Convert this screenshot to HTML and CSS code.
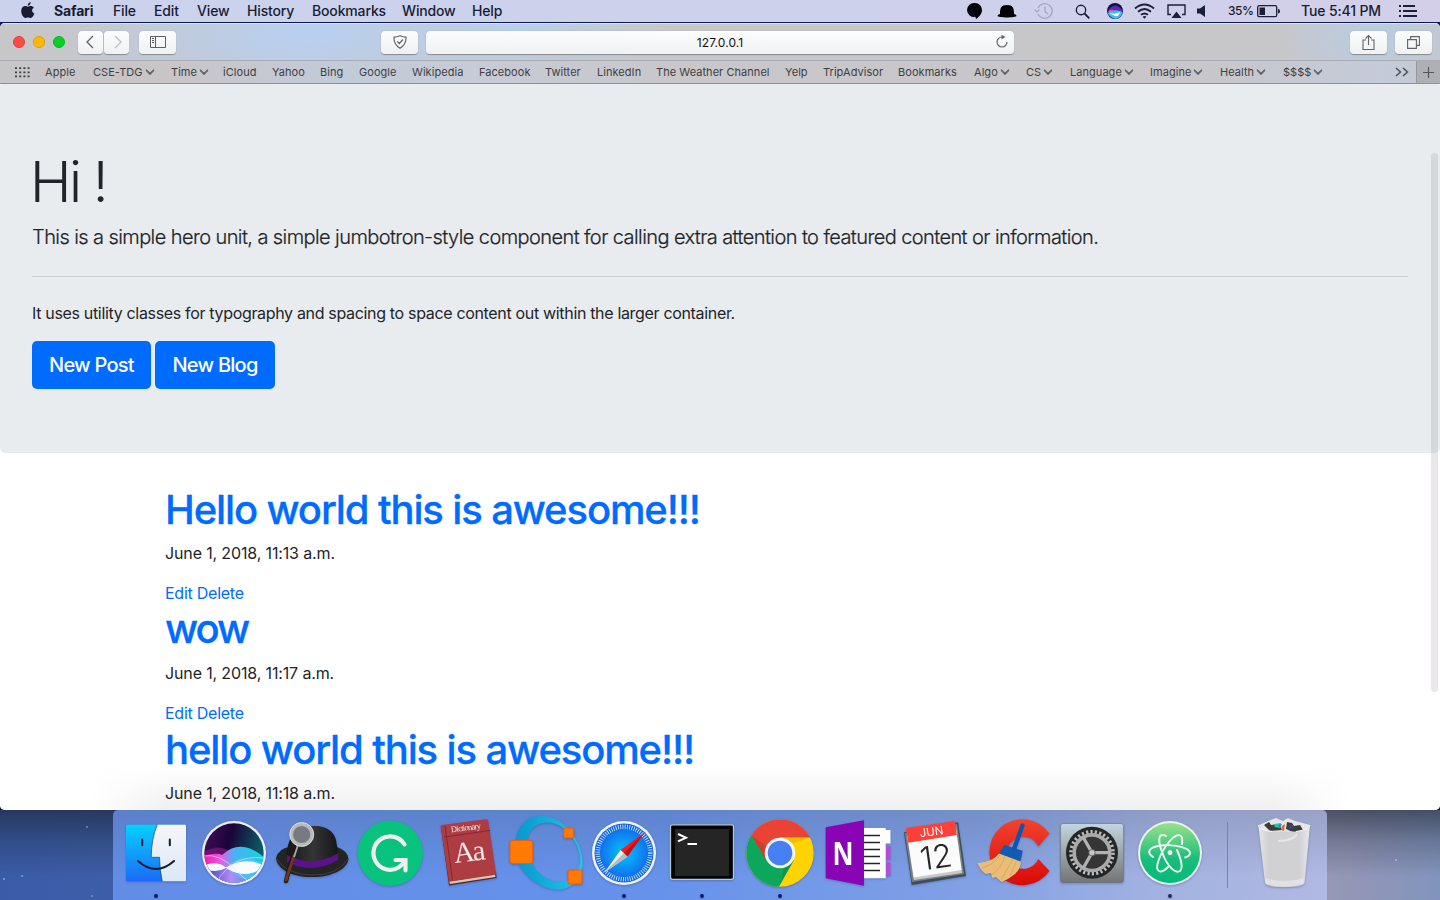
FILE: index.html
```html
<!DOCTYPE html>
<html lang="en">
<head>
<meta charset="utf-8">
<title>127.0.0.1</title>
<link rel="stylesheet" href="styles.css">
</head>
<body>
<header class="menubar">
  <nav class="menus">
    <svg class="apple" width="14" height="17" viewBox="0 0 14 17"><path fill="#181c33" d="M9.7 0C9.8 1.900 8.400 3.700 6.700 3.700 6.600 2 8 .3 9.700 0ZM6.900 4.700C7.600 4.700 8.500 4 9.900 4 11 4 12.200 4.600 12.900 5.600 10.300 7.100 10.700 10.600 13.400 11.600 12.600 13.900 11.200 16 9.700 16 8.600 16 8.300 15.400 7 15.400 5.700 15.400 5.300 16 4.300 16 2.400 16 .2 12.400.2 9.100.2 5.900 2.200 4.100 4.200 4.100 5.400 4.100 6.300 4.700 6.900 4.700Z"/></svg>
    <b>Safari</b><span>File</span><span>Edit</span><span>View</span><span>History</span><span>Bookmarks</span><span>Window</span><span>Help</span>
  </nav>
  <div class="extras">
    <svg width="16" height="18" viewBox="0 0 16 18"><path fill="#03030c" d="M8 1a7 7 0 0 1 7 7c0 4-3 7-6 9l-.6-2.200A7 7 0 1 1 8 1Z"/></svg>
    <svg width="20" height="18" viewBox="0 0 20 18"><path fill="#000" d="M3 12C3 6 4 3 10 3s7 3 7 9q2.500 .4 2.500 1.800C19.500 16 .5 16 .5 13.800Q.5 12.400 3 12Z"/></svg>
    <svg width="20" height="18" viewBox="0 0 20 18" fill="none" stroke="#a4a8c3" stroke-width="1.300"><path d="M4 6a7.400 7.400 0 1 1 0 6M.5 7.500 3 10l2.500-2.500M11 4.500V9.500l3 2.500"/></svg>
    <svg width="17" height="18" viewBox="0 0 17 18" fill="none" stroke="#1b2037" stroke-width="1.400"><circle cx="6" cy="8" r="4.700"/><path d="m9.500 11.500 4.800 4.800" stroke-width="1.800"/></svg>
    <svg width="17" height="18" viewBox="0 0 17 18"><circle cx="8" cy="9" r="8" fill="#150d4d"/><path fill="#5b2cb0" d="M2 7Q7 1 12 5T16 8L14 11Q7 7 2 11Z"/><path fill="#37c1ed" d="M.500 11Q7 6 15.500 10 15 15 9 17 3 16 .5 11Z"/><path fill="#fff" d="M2 11Q9 13 13 10 12 15 8 14Z"/><path fill="#f250a9" d="M1 9q5-3 7 1Q5 8 2 11Z"/></svg>
    <svg width="21" height="18" viewBox="0 0 21 18" fill="none" stroke="#1b2037" stroke-width="1.900"><path d="M1 6.500Q10.500-1.500 20 6.500M4 9.800Q10.500 4.200 17 9.800M7 12.800Q10.500 10 14 12.800"/><path d="m8.600 14.700 1.900 2 1.900-2q-1.900-1.500-3.800 0Z" fill="#1b2037" stroke="none"/></svg>
    <svg width="19" height="18" viewBox="0 0 19 18"><path d="M4 12.500H1V3H18V12.500H15" fill="none" stroke="#1b2037" stroke-width="1.400"/><path fill="#1b2037" d="M9.500 9.500 14.500 16H4.500Z"/></svg>
    <svg width="12" height="18" viewBox="0 0 12 18"><path fill="#1b2037" d="M0 6.500H3L8 3V15L3 11.500H0Z"/></svg>
    <span class="pct">35%</span>
    <svg width="24" height="18" viewBox="0 0 24 18"><rect x=".7" y="3.700" width="19" height="11" rx="1.500" fill="none" stroke="#1b2037" stroke-width="1.300"/><path fill="#1b2037" d="M2.500 5.500H8V13H2.500ZM21 7q2 0 2 2.200T21 11.500Z"/></svg>
    <span class="time">Tue 5:41 PM</span>
    <svg width="19" height="18" viewBox="0 0 19 18" stroke="#1b2037" stroke-width="1.800"><path d="M0 4H2M4 4H16M0 9H2M4 9H18M0 14H2M4 14H18" /></svg>
  </div>
</header>

<main class="window">
  <div class="toolbar">
    <div class="lights"><i class="red"></i><i class="yellow"></i><i class="green"></i></div>
    <div class="pair">
      <span class="tool back"><svg width="12" height="16" viewBox="0 0 12 16"><path d="M8 2 2 8l6 6" fill="none" stroke="#606166" stroke-width="1.300"/></svg></span>
      <span class="tool back"><svg width="12" height="16" viewBox="0 0 12 16"><path d="m4 2 6 6-6 6" fill="none" stroke="#bdbdc2" stroke-width="1.300"/></svg></span>
    </div>
    <span class="tool side"><svg width="16" height="12" viewBox="0 0 16 12" fill="none" stroke="#5d5e62"><path d="M.5.500H15.500V11.500H.5ZM5.500.500V11.500M2 2.500H4M2 4.500H4M2 6.500H4"/></svg></span>
    <span class="tool shield"><svg width="14" height="14" viewBox="0 0 14 14" fill="none" stroke="#636468" stroke-width="1.200"><path d="M7 .7Q10 2 13 2.200 13.500 9 7 13.200.5 9 1 2.200 4 2 7 .7ZM4.200 6.300 6.300 8.500 10 4.500"/></svg></span>
    <div class="address"><span>127.0.0.1</span><svg class="reload" width="14" height="15" viewBox="0 0 14 15"><path d="M7 3a5 5 0 1 0 5 5" fill="none" stroke="#66676b" stroke-width="1.200"/><path fill="#66676b" d="M6.500 .8 10.500 3.100 6.500 5.500Z"/></svg></div>
    <span class="tool share"><svg width="13" height="17" viewBox="0 0 13 17" fill="none" stroke="#626367" stroke-width="1.100"><path d="M4 6H1V15.500H12V6H9M6.500 11V1.500M3.500 4.500l3-3 3 3"/></svg></span>
    <span class="tool tabs"><svg width="13" height="13" viewBox="0 0 13 13" fill="none" stroke="#626367" stroke-width="1.100"><path d="M.6 3.600H9.400V12.400H.6ZM3.600 3.600V.6H12.400V9.400H9.400"/></svg></span>
  </div>
  <div class="favorites">
    <svg class="apps" width="15" height="11" viewBox="0 0 15 11" stroke="#3f4044" stroke-width="1.800" stroke-dasharray="2 2.200"><path d="M0 1.200H15M0 5.300H15M0 9.400H15"/></svg>
    <span>Apple</span><span class="folder">CSE-TDG</span><span class="folder">Time</span><span>iCloud</span><span>Yahoo</span><span>Bing</span><span>Google</span><span>Wikipedia</span><span>Facebook</span><span>Twitter</span><span>LinkedIn</span><span>The Weather Channel</span><span>Yelp</span><span>TripAdvisor</span><span>Bookmarks</span><span class="folder">Algo</span><span class="folder">CS</span><span class="folder">Language</span><span class="folder">Imagine</span><span class="folder">Health</span><span class="folder">$$$$</span>
    <svg width="14" height="10" viewBox="0 0 14 10"><path d="M1 1 5.500 5 1 9M8 1l4.500 4L8 9" fill="none" stroke="#4a4b54" stroke-width="1.400"/></svg>
    <span class="plus"><svg width="11" height="11" viewBox="0 0 11 11"><path d="M5.500 0V11M0 5.500H11" stroke="#55565c" stroke-width="1.200"/></svg></span>
  </div>
  <div class="page">
    <section class="jumbotron">
      <h1 class="display">Hi !</h1>
      <p class="lead">This is a simple hero unit, a simple jumbotron-style component for calling extra attention to featured content or information.</p>
      <hr>
      <p class="note">It uses utility classes for typography and spacing to space content out within the larger container.</p>
      <div class="buttons"><a class="btn">New Post</a><a class="btn">New Blog</a></div>
    </section>
    <section class="posts">
      <article><h1>Hello world this is awesome!!!</h1><p class="date">June 1, 2018, 11:13 a.m.</p><div class="links"><a>Edit</a> <a>Delete</a></div></article>
      <article><h1 class="short">wow</h1><p class="date">June 1, 2018, 11:17 a.m.</p><div class="links"><a>Edit</a> <a>Delete</a></div></article>
      <article><h1>hello world this is awesome!!!</h1><p class="date">June 1, 2018, 11:18 a.m.</p></article>
    </section>
    <i class="scrollbar"></i>
  </div>
</main>

<footer class="desktop">
  <div class="dock">
    <!-- Finder -->
    <svg class="app running" viewBox="0 0 78 90"><defs>
      <linearGradient id="fb" x2="0" y2="1"><stop stop-color="#05d1ff"/><stop offset="1" stop-color="#1b6bf8"/></linearGradient>
      <linearGradient id="fw" x2="0" y2="1"><stop stop-color="#f8f6f8"/><stop offset="1" stop-color="#dae8f5"/></linearGradient></defs>
      <rect x="9" y="14.700" width="60" height="56.500" rx="1.500" fill="url(#fb)"/><path fill="url(#fw)" d="M40.300 14.700H68Q69 14.700 69 16V70q0 1.200-1 1.200H45.500Q43 60 42.500 47.300H34.200Q34.500 28 40.300 14.700Z"/><path d="M45 71Q42.800 60 42.500 47.300H34.200Q34.500 28 40.300 14.700" fill="none" stroke="#1a4b7b" stroke-width=".7"/><path d="M25.200 29.500v5.700M52.800 29.500v5.700M21 51Q39 67 57 51" fill="none" stroke="#101b2a" stroke-width="2" stroke-linecap="round"/><circle cx="39" cy="86" r="1.900" fill="#07105e"/></svg>
    <!-- Siri -->
    <svg class="app" viewBox="0 0 78 90"><defs><linearGradient id="si" x1="0" x2="1" y2=".3"><stop stop-color="#51106f"/><stop offset=".5" stop-color="#1b0538"/><stop offset="1" stop-color="#07716f"/></linearGradient><clipPath id="sc"><circle cx="39" cy="43" r="29.700"/></clipPath>
      <linearGradient id="sp"><stop stop-color="#ff12a5"/><stop offset=".3" stop-color="#e45fe8"/><stop offset=".5" stop-color="#4bb0f5"/><stop offset="1" stop-color="#11d4df"/></linearGradient>
      <linearGradient id="sb"><stop stop-color="#283fc4"/><stop offset=".45" stop-color="#b48af5"/><stop offset="1" stop-color="#1e8ef2"/></linearGradient></defs>
      <circle cx="39" cy="43" r="32" fill="#eeedf1"/><g clip-path="url(#sc)"><rect width="78" height="90" fill="url(#si)"/><path fill="#b2209c" opacity=".45" d="M8 43Q25 30 44 48L30 56 8 55Z"/><path fill="url(#sp)" d="M8 46Q22 42 27 45 46 27 70 48V76H8Z"/><path fill="url(#sb)" d="M8 58H70V80H8Z"/><path fill="#43cdf7" opacity=".8" d="M31 58Q45 40 70 55V60Q56 74 46 68Z"/><path fill="#f8fcff" d="M8 56Q21 50 31 57.500 50 46 70 56 52 71 31 58 20 64 8 58Z"/><path d="M8 46Q25 43 41 60T58 72M21 73Q38 44 68 48" fill="none" stroke="#ffd2fb" opacity=".65"/></g></svg>
    <!-- Alfred -->
    <svg class="app" viewBox="0 0 78 90"><defs><linearGradient id="ha"><stop stop-color="#161616"/><stop offset=".5" stop-color="#353535"/><stop offset="1" stop-color="#161616"/></linearGradient></defs><path fill="#242424" d="M3 48Q6 38 17 37H64Q75 41 75.500 49C74 61 54 68 38 67 18 67 4 59 3 48Z"/><path d="M4 49Q12 64 38 65T75 49" fill="none" stroke="#454545" stroke-width=".8"/><path fill="url(#ha)" d="M14 49C13 31 20 22 31 18 49 12 61 20 63 30Q65 38 65 47 40 63 14 49Z"/><path fill="#5b118a" d="M14 45Q38 58 65 43.500V50Q40 65 14 52Z"/><path d="M22 37 13 71" stroke="#221716" stroke-width="4.500" stroke-linecap="round"/><path d="M21 46 13 70" stroke="#6c381d" stroke-width="3" stroke-linecap="round"/><path d="m25 35-4 12" stroke="#aaa" stroke-width="1.800"/><circle cx="28.700" cy="24.500" r="10.300" fill="#777b80" stroke="#b9b9b9" stroke-width="3.400"/><circle cx="28.700" cy="24.500" r="12" fill="none" stroke="#eee" stroke-width=".8"/></svg>
    <!-- Grammarly -->
    <svg class="app" viewBox="0 0 78 90"><circle cx="39.200" cy="43.300" r="32.700" fill="#08c27d"/><path d="M53.500 34.500A16.700 16.700 0 1 0 47.500 57.500Q51 55 54.500 50.500M44.500 50H54.500V60.500" fill="none" stroke="#efefef" stroke-width="4.200" stroke-linecap="round"/></svg>
    <!-- Dictionary -->
    <svg class="app" viewBox="0 0 78 90"><path fill="#55252b" d="m12 17 8 58.500L67.700 68 67 62Z"/><path fill="#d6c9ad" d="M20 71.500 66 64 66.500 67 21 74Z"/><path fill="#ae3c43" d="M11.700 16.700Q11 15.500 13 15L57 9.300Q59 9 59.300 11L67 63Q67 64.500 65 65L20 71.700Z"/><path d="m16 15.500 7.500 55M15 27 61 20.500" stroke="#84272f" fill="none"/><g transform="rotate(-7 38 43)" fill="#f7e7e5" font-family="Liberation Serif, serif"><text x="25" y="20.500" font-size="8.500" textLength="30">Dictionary</text><text x="24.500" y="51.500" font-size="29" textLength="32">Aa</text></g></svg>
    <!-- Octave -->
    <svg class="app" viewBox="0 0 78 90"><defs><linearGradient id="oc"><stop stop-color="#0797cf"/><stop offset="1" stop-color="#25c5e5"/></linearGradient></defs><path fill="url(#oc)" fill-rule="evenodd" d="M8 38C8 19 18 6 34 6 46 6 58 13 66 25 74 36 78 52 74 62 68 77 56 83 41 78 22 72 8 56 8 38ZM20 34C20 51 33 72 54 72 66 72 73 61 73 49 73 40 68 30 62 23 55 15 46 12 39 12.500 26 14 20 22 20 34Z"/><g fill="#ff7b05" stroke="#eb5d14" stroke-width="1.200"><rect x="2.900" y="30.500" width="23" height="23" rx="3"/><rect x="56.700" y="18" width="10" height="10" rx="1.500"/><rect x="61" y="60" width="14" height="14" rx="2"/></g></svg>
    <!-- Safari -->
    <svg class="app running" viewBox="0 0 78 90"><defs><radialGradient id="sa"><stop stop-color="#06c4ff"/><stop offset="1" stop-color="#125fe7"/></radialGradient></defs><circle cx="39" cy="43" r="32" fill="#f2f3f5"/><circle cx="39" cy="43" r="29.500" fill="url(#sa)"/><circle cx="39" cy="43" r="26.300" fill="none" stroke="#d8efff" stroke-width="4.500" stroke-dasharray=".8 1.495"/><path fill="#f81a1e" d="M59.500 22.500 35.500 40 42.500 46.500Z"/><path fill="#f0f0f0" d="m35.500 40 7 6.500L19.500 62.500Z"/><path fill="#b7bac0" d="m39 43 3.500 3.500L19.500 62.500Z"/><path fill="#c90c18" d="m39 43 3.500 3.500 17-24Z"/><circle cx="39" cy="86" r="1.900" fill="#07105e"/></svg>
    <!-- Terminal -->
    <svg class="app running" viewBox="0 0 78 90"><rect x="7.500" y="14.800" width="63" height="54.500" rx="2" fill="#050505" stroke="#b5c7ce" stroke-width="1.300"/><rect x="12" y="19" width="54" height="47" fill="#252525"/><path d="m15 24 8 3.700-8 3.700M24.500 34H34" fill="none" stroke="#fff" stroke-width="2"/><circle cx="39" cy="86" r="1.900" fill="#07105e"/></svg>
    <!-- Chrome -->
    <svg class="app running" viewBox="0 0 78 90"><circle cx="39" cy="43" r="33.700" fill="#ffd302"/><path fill="#0da75b" d="M10.500 25A33.700 33.700 0 0 0 38 76.700L53 50 39 43Z"/><path fill="#ea4335" d="M10.500 25A33.700 33.700 0 0 1 69 27.500H39L25 50Z"/><path fill="#a92e29" opacity=".35" d="M11 26 25 50 28 38Z"/><path fill="#087748" opacity=".35" d="M53 50 39 74 43 58Z"/><path fill="#c99b06" opacity=".35" d="M39 27.500H68L53 33Z"/><circle cx="39" cy="43" r="15.300" fill="#f4f4f4"/><circle cx="39" cy="43" r="12.300" fill="#4681f4"/><circle cx="39" cy="86" r="1.900" fill="#07105e"/></svg>
    <!-- OneNote -->
    <svg class="app" viewBox="0 0 78 90"><path fill="#fff" d="M44 18H66.700V20H71.500V33.500H66.700V68.300H44Z"/><path fill="#b350d2" d="M67 36h4.500V49.500H67ZM67 52.300h4.500V66H67Z"/><path d="M45 25.500H61M45 32.500H61M45 39.500H61M45 46.500H61M45 53.500H61M45 60.500H61" stroke="#252525" stroke-width="1.700"/><path fill="#8904b5" d="M6.700 17.300 45 10.300V75.700L6.700 68.300Z"/><text x="13.500" y="54.500" font-family="Open Sans, sans-serif" font-size="32" font-weight="700" textLength="21" lengthAdjust="spacingAndGlyphs" fill="#fff">N</text></svg>
    <!-- Calendar -->
    <svg class="app" viewBox="0 0 78 90"><path fill="#3f4d55" d="M7 22.300 61 12.300 69 66 14.700 75Z"/><path fill="#788288" d="m8 23 52-9 7 50-52 8Z"/><path fill="#c9c9c7" d="m17 70 48-7-.5-4-48 7Z"/><path fill="#fbfbfb" d="M10 25 59 18 64.700 60 16.500 67.500Z"/><path fill="#ff4038" d="M9 18 58 11 59.700 25 11.300 32.800Z"/><g transform="rotate(-8 37 40)" text-anchor="middle" font-family="Inter, sans-serif"><text x="37" y="25.500" font-size="11.500" fill="#fff">JUN</text><text x="38" y="58.500" font-size="32" font-weight="300" textLength="32" fill="#252525">12</text></g></svg>
    <!-- CCleaner -->
    <svg class="app" viewBox="0 0 78 90"><defs><linearGradient id="cc" x2="0" y2="1"><stop stop-color="#f3432e"/><stop offset="1" stop-color="#d80a08"/></linearGradient></defs><path fill="url(#cc)" d="M74.500 23.500A33 33 0 1 0 74.500 61L63.300 49A16 16 0 1 1 63.300 36.500Z"/><path fill="#eabd77" d="M24.500 43Q18 52 2.500 53 5 60 11 64L16 63 17 68 21 67 26.500 72Q34 69 40 64T46 50Z"/><path d="M25 45Q20 54 7 58M30 46Q26 59 15 66M38 49 26 70M42 50 35 66" fill="none" stroke="#c99250" stroke-width=".5"/><path fill="#125ab4" d="M29.300 35 47.700 40.700 45.500 51.500 24 43.500Z"/><path d="M47.500 15.500 39 39" stroke="#0d55ad" stroke-width="4.400" stroke-linecap="round"/></svg>
    <!-- System Preferences -->
    <svg class="app" viewBox="0 0 78 90"><defs><linearGradient id="sy" x2="0" y2="1"><stop stop-color="#c3d6df"/><stop offset="1" stop-color="#747474"/></linearGradient></defs><rect x="7.500" y="13.500" width="63" height="59" rx="2.500" fill="url(#sy)" stroke="#6a7176" stroke-width=".6"/><circle cx="39" cy="42.700" r="26" fill="#252628"/><circle cx="39" cy="42.700" r="21" fill="none" stroke="#bcbcbc" stroke-width="3.500" stroke-dasharray="2.200 2.198"/><circle cx="39" cy="42.700" r="17.800" fill="#353535" stroke="#aaa" stroke-width="3.600"/><path d="M39 42.700H57M39 42.700 30 27M39 42.700 30 58.500" stroke="#b2b2b2" stroke-width="3.300"/><circle cx="39" cy="42.700" r="3.200" fill="#c6c6c6" stroke="#555" stroke-width=".8"/></svg>
    <!-- Atom -->
    <svg class="app running" viewBox="0 0 78 90"><defs><linearGradient id="at" x2="0" y2="1"><stop stop-color="#98e18a"/><stop offset=".6" stop-color="#19bd7b"/><stop offset="1" stop-color="#06b979"/></linearGradient></defs><circle cx="39" cy="43" r="32" fill="#eef2ed"/><circle cx="39" cy="43" r="30" fill="url(#at)"/><g fill="none" stroke="#f4fff8" stroke-width="1.900" stroke-linecap="round"><path d="M22 47C15 42 18 37 30 35.500 45 34 59 38 59 43Q59 46 54 47.500"/><path d="M51 34C53 23 46 22 38 32 29 43 23 59 28 61Q31 63 37 57"/><path d="M35 26C28 22 26 29 31 42 36 56 44 64 49 61 52 58 50 49 46 40"/></g><circle cx="39" cy="42.700" r="2.400" fill="#fff"/><circle cx="39" cy="86" r="1.900" fill="#152957"/></svg>
    <i class="separator"></i>
    <!-- Trash -->
    <svg class="app" viewBox="0 0 78 90"><defs><linearGradient id="tr"><stop stop-color="#e7e7eb"/><stop offset=".2" stop-color="#d0d0d3"/><stop offset=".8" stop-color="#d2d2d5"/><stop offset="1" stop-color="#e7e8ee"/></linearGradient></defs><path fill="#e5e5e5" d="m14 15 9-4 8-3 7 3 5-3 7 3 8 2 7 2-6 8H19Z"/><path fill="#3c3c3f" d="m19 15 5-3 2 3 8-1 3 6-12 1ZM42 12l5 1 2 3 6-1 3 5-8 3-9-4Z"/><path fill="#21c8ad" d="m29 14 7-1-1 5-5-1Z"/><path fill="#3978d1" d="m33 15 4-1-2 4Z"/><path fill="#d26d36" d="m37 16 3-2-1 7-3-1Z"/><path fill="#3e4279" d="m45 14 4 2-1 4-5-2Z"/><path fill="url(#tr)" d="M13.300 15Q14 20 27 21.500H51Q64 20 65 15L59.500 73Q57 77 39.500 77T20 73Z"/><path d="M13.300 15Q14 20 27 21.500M51 21.500Q64 20 65 15" fill="none" stroke="#f4f5f8" stroke-width="1.200"/><path d="M33 31Q48 31 52 24" fill="none" stroke="#fff" opacity=".45" stroke-width="2"/><path fill="#fff" opacity=".35" d="M20 68Q39 74 59 68L58 74Q39 79 21 74Z"/></svg>
  </div>
</footer>
</body>
</html>
```
FILE: styles.css
```css
* { box-sizing: border-box; }
body { margin: 0; width: 1440px; height: 900px; overflow: hidden; display: flex; flex-direction: column; background: #0b1a57; font-family: Inter, "Liberation Sans", sans-serif; color: #212529; }
svg { display: block; flex: none; }
p, h1 { margin: 0; white-space: nowrap; }

.menubar { height: 22px; flex: none; display: flex; justify-content: space-between; background: linear-gradient(90deg, #cbd3ec, #cdd1eb 55%, #d3cfe8); color: #181d33; font-size: 14px; line-height: 22px; white-space: nowrap; }
.menus { display: grid; grid-template-columns: 33px 59px 41px 43px 50px 65px 90px 70px 60px; padding-left: 21px; letter-spacing: -.15px; font-weight: 450; }
.menus b { font-weight: 700; }
.apple { margin-top: 2px; }
.extras { display: grid; grid-template-columns: 30px 37px 41px 32px 27px 33px 30px 31px 29px 44px 98px 41px; width: 473px; align-items: center; }
.pct { font-size: 12px; letter-spacing: -.5px; font-weight: 450; }
.time { font-size: 14px; letter-spacing: -.15px; font-weight: 450; }

.window { height: 787px; margin-top: 1px; flex: none; display: flex; flex-direction: column; border-radius: 5px; overflow: hidden; background: #fff; z-index: 1; }
.toolbar { height: 38px; flex: none; display: flex; align-items: center; border-top: 1px solid #dce5f2; border-bottom: 1px solid #abadb6; background: radial-gradient(ellipse 260px 90px at 310px 10px, #b8d0f1, transparent), radial-gradient(ellipse 150px 50px at 520px 4px, #b8cfee, transparent), radial-gradient(ellipse 100px 60px at 1375px 10px, #b9cce4, transparent), #c7c7c9; }
.lights { display: flex; gap: 8px; margin-left: 13px; width: 65px; }
.lights i { width: 12px; height: 12px; border-radius: 50%; }
.red { background: #ff4b44; border: 1px solid #e23d38; }
.yellow { background: #ffb900; border: 1px solid #df9c08; }
.green { background: #05cf29; border: 1px solid #0bb51e; }
.pair { display: flex; gap: 1px; }
.tool, .address { height: 23px; display: flex; align-items: center; justify-content: center; background: linear-gradient(#fcfdfe, #f0f1f1); border-radius: 4px; box-shadow: 0 .5px 1px #858991; }
.tool { width: 37px; }
.back { width: 25px; }
.side { margin-left: 10px; }
.shield { margin-left: 205px; }
.address { position: relative; width: 588px; margin-left: 8px; font-size: 12px; letter-spacing: .1px; color: #111; }
.reload { position: absolute; right: 5px; top: 3px; }
.share { margin-left: 336px; }
.tabs { margin-left: 8px; }

.favorites { height: 23px; flex: none; display: grid; grid-template-columns: 30px 48px 78px 52px 49px 48px 39px 53px 67px 66px 52px 59px 129px 38px 75px 76px 52px 44px 80px 70px 63px 112px 21px 24px; padding-left: 15px; align-items: center; border-bottom: 1px solid #8e9298; background: linear-gradient(90deg, #c6c5c7, #c9c5c7 12%, #c2cbd9 24%, #c7cbd5 34%, #c8c7c9 48%, #c8c6c8 82%, #c4cbd9 96%, #c5c9d1); font-size: 11px; letter-spacing: .05px; color: #3f4045; white-space: nowrap; }
.folder { display: flex; align-items: center; }
.folder::after { content: ""; width: 5px; height: 5px; margin: -4px 0 0 4px; border: solid #46474b; border-width: 0 1.500px 1.500px 0; transform: rotate(45deg); box-shadow: .5px .5px 0 #46474b; }
.plus { height: 22px; display: flex; align-items: center; justify-content: center; border-left: 1px solid #96989e; background: #aeb0b6; }

.page { position: relative; flex: 1; background: #fff; }
.page::before { content: ""; position: absolute; left: 90px; right: 90px; bottom: 0; height: 55px; background: linear-gradient(transparent, #ececec); -webkit-mask-image: linear-gradient(90deg, transparent, #000 6%, #000 94%, transparent); mask-image: linear-gradient(90deg, transparent, #000 6%, #000 94%, transparent); }
.jumbotron { height: 369px; padding: 64px 32px; background: #e9ecef; border-radius: 2px 2px 5px 5px; }
.display { font-size: 56px; font-weight: 300; line-height: 68px; margin-bottom: 6px; margin-left: -2px; letter-spacing: -2.500px; }
.lead { font-size: 20px; font-weight: 300; line-height: 30px; letter-spacing: -.587px; -webkit-text-stroke: .2px #212529; }
hr { margin: 24px 0; border: 0; border-top: 1px solid #cfd2d5; }
.note, .date, .links { font-size: 16px; line-height: 24px; letter-spacing: -.33px; }
.note { margin-bottom: 16px; }
.buttons { display: flex; gap: 4px; }
.btn { height: 48px; width: 119px; border-radius: 5px; background: #006bff; color: #fff; font-size: 20px; font-weight: 450; line-height: 48px; text-align: center; letter-spacing: -.75px; white-space: nowrap; }
.btn + .btn { width: 120px; }
.posts { position: relative; padding: 32px 0 0 165px; }
.posts h1 { font-size: 40px; font-weight: 550; line-height: 50px; margin-bottom: 6px; color: #006bff; letter-spacing: -1.130px; -webkit-text-stroke: .3px #006bff; }
.posts .short { line-height: 48px; margin-bottom: 8px; letter-spacing: -2px; }
.posts .date { margin-bottom: 16px; letter-spacing: -.14px; }
.links { color: #006bff; letter-spacing: -.25px; }
.scrollbar { position: absolute; right: 2px; top: 69px; width: 7px; height: 539px; border-radius: 4px; background: rgba(125, 110, 125, .17); }

.desktop { height: 90px; flex: none; padding: 0 113px; background: radial-gradient(circle at 4px 69px, #a0bce4aa .5px, transparent 1.500px), radial-gradient(circle at 22px 66px, #a0bce4aa .5px, transparent 1.500px), radial-gradient(circle at 87px 17px, #8ba5ccaa .5px, transparent 1.500px), radial-gradient(circle at 92px 86px, #8ba5ccaa .5px, transparent 1.500px), radial-gradient(circle at 1396px 50px, #c2cde6aa .5px, transparent 1.500px), linear-gradient(180deg, rgba(25, 32, 45, .6), rgba(25, 32, 45, .25) 35%, transparent 75%), linear-gradient(90deg, #3a5ca8, #3e5ea9 10%, #9798b5 92%, #8294bd); }
.dock { height: 90px; display: flex; padding-left: 4px; border-radius: 5px 5px 0 0; background: linear-gradient(180deg, rgba(70, 80, 100, .22), transparent 75%), linear-gradient(90deg, #628de6, #6692eb 45%, #83a1e4 72%, #a3b2e1 86%, #b0b9e2); }
.app { width: 78px; height: 90px; filter: drop-shadow(0 1px 1px #1b27594d); }
.separator { width: 1px; height: 66px; margin: 12px 17px 0 18px; background: #7783a9; }
```
